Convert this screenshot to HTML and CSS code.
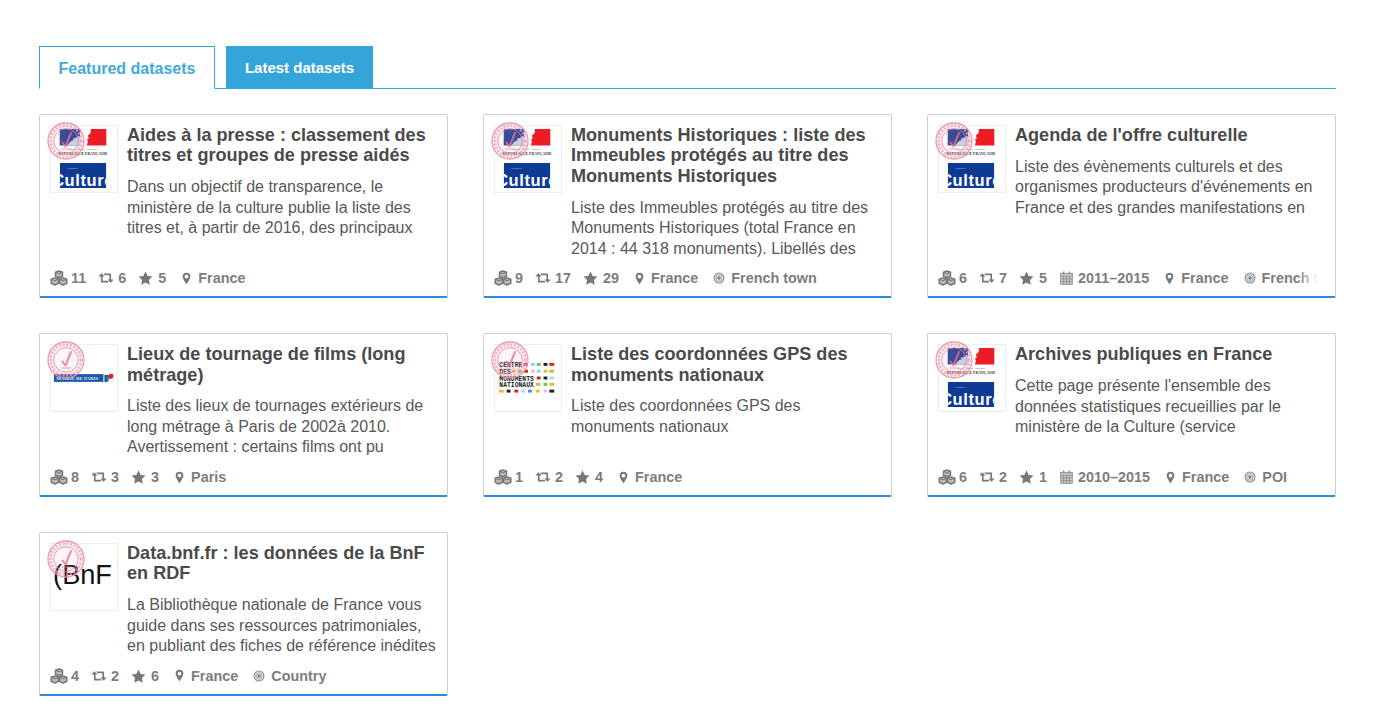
FILE: index.html
```html
<!DOCTYPE html>
<html lang="fr">
<head>
<meta charset="utf-8">
<title>Datasets</title>
<link rel="stylesheet" href="styles.css">
</head>
<body>
<svg class="defs" width="0" height="0" aria-hidden="true">
  <defs>
    <symbol id="i-cubes" viewBox="0 0 18 16">
      <g fill="#bbb" stroke="currentColor" stroke-width="1.500" stroke-linejoin="round">
        <path d="M9 1l3.500 1.300v4L9 7.800 5.500 6.300v-4z"/>
        <path d="M5 8l3.500 1.300v4L5 15 1.200 13.300v-4z"/>
        <path d="M13 8l3.800 1.300v4L13 15l-3.500-1.700v-4z"/>
        <path d="M5.500 2.300L9 3.800l3.500-1.500M1.200 9.300L5 10.800l3.500-1.500M9.500 9.300l3.500 1.500 3.800-1.500" fill="none" stroke-width="1"/>
      </g>
    </symbol>
    <symbol id="i-retweet" viewBox="0 0 17 12">
      <path fill="currentColor" d="M3.500 1L7 4.500H4.900V9H10l1.500 1.800H3.800a.7.700 0 0 1-.7-.7V4.500H.400z"/>
      <path fill="currentColor" d="M13.500 11L10 7.500h2.100V3H7L5.500 1.200h7.700a.7.700 0 0 1 .7.700v5.600h2.700z"/>
    </symbol>
    <symbol id="i-star" viewBox="0 0 16 15">
      <path fill="currentColor" d="M8 .5l2.300 4.800 5.200.7-3.800 3.600.9 5.200L8 12.300l-4.600 2.500.9-5.200L.5 6l5.200-.7z"/>
    </symbol>
    <symbol id="i-marker" viewBox="0 0 10 14">
      <path fill="currentColor" fill-rule="evenodd" d="M5 .5a4.300 4.300 0 0 1 4.300 4.300c0 2-2.700 6.500-4.300 8.700C3.400 11.300.7 6.800.7 4.800A4.300 4.300 0 0 1 5 .5zm0 2.200a2.100 2.100 0 1 0 0 4.200 2.100 2.100 0 0 0 0-4.200z"/>
    </symbol>
    <symbol id="i-calendar" viewBox="0 0 14 15">
      <rect x=".5" y="2" width="13" height="12.500" fill="#ccc"/>
      <g fill="none" stroke="#8a8a8a" stroke-width=".9">
        <rect x=".8" y="2.500" width="12.400" height="11.800"/>
        <path d="M.8 5.500h12.400M.8 8.500h12.400M.8 11.400h12.400M3.900 5.500v8.800M7 5.500v8.800M10.100 5.500v8.800"/>
        <path d="M3.900.5v3M10.100.5v3" stroke-width="1.500"/>
      </g>
    </symbol>
    <symbol id="i-bullseye" viewBox="0 0 14 14">
      <circle cx="7" cy="7" r="5.800" fill="#ddd" stroke="#8d8d8d" stroke-width="1.200"/>
      <circle cx="7" cy="7" r="3.700" fill="#eee" stroke="#999" stroke-width=".9"/>
      <circle cx="7" cy="7" r="2.100" fill="#808080"/>
    </symbol>
    <symbol id="seal" viewBox="0 0 38 38">
      <circle cx="19" cy="19" r="18" fill="#f1a9ba" fill-opacity=".12" stroke="#ea8fa5" stroke-opacity=".9" stroke-width="1.300"/>
      <circle cx="19" cy="19" r="15.300" fill="none" stroke="#ee9fb2" stroke-opacity=".75" stroke-width="3" stroke-dasharray="2 1.600"/>
      <circle cx="19" cy="19" r="12.300" fill="none" stroke="#e8849c" stroke-opacity=".85" stroke-width="1"/>
      <path d="M15.500 20.500l3 4L24 11" fill="none" stroke="#e8718e" stroke-opacity=".8" stroke-width="2" stroke-linecap="round" stroke-linejoin="round"/>
      <path d="M14 27h10" stroke="#e8849c" stroke-opacity=".7" stroke-width="1.100"/>
    </symbol>
    <symbol id="logo-culture" viewBox="0 0 68 68">
      <rect x="9" y="3" width="21" height="17" fill="#1f3f95"/>
      <path d="M17 20c2-3 5-6 7-5l-2-2c2 0 5-1 6-3l2 2v8z" fill="#c9d3ea"/>
      <path d="M41 3H57V20H37l1-4-1-2 2-1-1-3 3-3z" fill="#ed1c24"/>
      <text x="33" y="24.500" class="logo-tiny">Liberté · Égalité · Fraternité</text>
      <text x="33" y="29.500" class="logo-rf">RÉPUBLIQUE FRANÇAISE</text>
      <svg x="9" y="38" width="48" height="26" viewBox="0 0 48 26">
        <rect width="48" height="26" fill="#0f3a94"/>
        <text x="8" y="6" class="logo-min">Ministère</text>
        <text x="24" y="24" class="logo-cult">Culture</text>
      </svg>
    </symbol>
    <symbol id="logo-paris" viewBox="0 0 68 68">
      <rect x="3" y="30" width="61" height="8" fill="#1c5aa8"/>
      <text x="27" y="36" class="logo-paris-t">MAIRIE DE PARIS</text>
      <rect x="54" y="30" width="10" height="8" fill="#fff"/>
      <path d="M60 30h4v4l-3 1-3-1z" fill="#e2231a"/>
      <path d="M55 31h4l1 2-3 1 3 1-2 3h-3z" fill="#1c5aa8"/>
    </symbol>
    <symbol id="logo-gps" viewBox="0 0 68 68">
      <text x="4.500" y="23" class="logo-gps-t">CENTRE</text>
      <text x="4.500" y="30" class="logo-gps-t">DES</text>
      <text x="4.500" y="37" class="logo-gps-t">MONUMENTS</text>
      <text x="4.500" y="43.500" class="logo-gps-t">NATIONAUX</text>
      <g>
        <rect x="29" y="18.500" width="5" height="3" fill="#e2231a"/><rect x="37" y="18.500" width="4" height="3" fill="#8fd0ee"/><rect x="43" y="18.500" width="4" height="3" fill="#6bbf4e"/><rect x="50" y="18.500" width="4" height="3" fill="#222"/><rect x="56" y="18.500" width="5" height="3" fill="#e2231a"/>
        <rect x="17" y="25.500" width="4" height="3" fill="#f2b632"/><rect x="24" y="25.500" width="4" height="3" fill="#6bbf4e"/><rect x="30" y="25.500" width="4" height="3" fill="#e2231a"/><rect x="37" y="25.500" width="4" height="3" fill="#f5b6cf"/><rect x="43" y="25.500" width="4" height="3" fill="#8fd0ee"/><rect x="50" y="25.500" width="4" height="3" fill="#f2b632"/><rect x="56" y="25.500" width="5" height="3" fill="#c9c22f"/>
        <rect x="43" y="32.500" width="4" height="3" fill="#e2231a"/><rect x="50" y="32.500" width="4" height="3" fill="#222"/><rect x="56" y="32.500" width="5" height="3" fill="#a8dcf2"/>
        <rect x="42" y="39" width="5" height="3" fill="#c9c22f"/><rect x="50" y="39" width="4" height="3" fill="#6bbf4e"/><rect x="56" y="39" width="5" height="3" fill="#f2b632"/>
        <rect x="4" y="46" width="5" height="3" fill="#f2b632"/><rect x="12" y="46" width="4" height="3" fill="#222"/><rect x="20" y="46" width="4" height="3" fill="#e2231a"/><rect x="27" y="46" width="4" height="3" fill="#a8dcf2"/><rect x="34" y="46" width="4" height="3" fill="#3a9ad9"/><rect x="42" y="46" width="4" height="3" fill="#f2b632"/><rect x="50" y="46" width="4" height="3" fill="#f5b6cf"/><rect x="56" y="46" width="5" height="3" fill="#222"/>
      </g>
    </symbol>
    <symbol id="logo-bnf" viewBox="0 0 68 68">
      <text x="32.500" y="41" class="logo-bnf-t">(BnF</text>
    </symbol>
  </defs>
</svg>

<main class="page">
  <nav class="tabs">
    <a class="tab tab-active">Featured datasets</a>
    <a class="tab tab-idle">Latest datasets</a>
  </nav>

  <section class="grid">
    <article class="card">
      <div class="top">
        <div class="logo"><svg class="logo-img"><use href="#logo-culture"/></svg><svg class="seal"><use href="#seal"/></svg></div>
        <div class="body">
          <h4 class="title">Aides à la presse : classement des titres et groupes de presse aidés</h4>
          <p class="desc">Dans un objectif de transparence, le ministère de la culture publie la liste des titres et, à partir de 2016, des principaux</p>
        </div>
      </div>
      <ul class="meta">
        <li><svg class="ic ic-cubes"><use href="#i-cubes"/></svg>11</li>
        <li><svg class="ic ic-rt"><use href="#i-retweet"/></svg>6</li>
        <li><svg class="ic ic-star"><use href="#i-star"/></svg>5</li>
        <li><svg class="ic ic-marker"><use href="#i-marker"/></svg>France</li>
      </ul>
    </article>

    <article class="card">
      <div class="top">
        <div class="logo"><svg class="logo-img"><use href="#logo-culture"/></svg><svg class="seal"><use href="#seal"/></svg></div>
        <div class="body">
          <h4 class="title">Monuments Historiques : liste des Immeubles protégés au titre des Monuments Historiques</h4>
          <p class="desc">Liste des Immeubles protégés au titre des Monuments Historiques (total France en 2014 : 44 318 monuments). Libellés des</p>
        </div>
      </div>
      <ul class="meta">
        <li><svg class="ic ic-cubes"><use href="#i-cubes"/></svg>9</li>
        <li><svg class="ic ic-rt"><use href="#i-retweet"/></svg>17</li>
        <li><svg class="ic ic-star"><use href="#i-star"/></svg>29</li>
        <li><svg class="ic ic-marker"><use href="#i-marker"/></svg>France</li>
        <li><svg class="ic ic-bull"><use href="#i-bullseye"/></svg>French town</li>
      </ul>
    </article>

    <article class="card">
      <div class="top">
        <div class="logo"><svg class="logo-img"><use href="#logo-culture"/></svg><svg class="seal"><use href="#seal"/></svg></div>
        <div class="body">
          <h4 class="title">Agenda de l'offre culturelle</h4>
          <p class="desc">Liste des évènements culturels et des organismes producteurs d'événements en France et des grandes manifestations en</p>
        </div>
      </div>
      <ul class="meta meta-fade">
        <li><svg class="ic ic-cubes"><use href="#i-cubes"/></svg>6</li>
        <li><svg class="ic ic-rt"><use href="#i-retweet"/></svg>7</li>
        <li><svg class="ic ic-star"><use href="#i-star"/></svg>5</li>
        <li><svg class="ic ic-cal"><use href="#i-calendar"/></svg>2011–2015</li>
        <li><svg class="ic ic-marker"><use href="#i-marker"/></svg>France</li>
        <li><svg class="ic ic-bull"><use href="#i-bullseye"/></svg>French town</li>
      </ul>
    </article>

    <article class="card">
      <div class="top">
        <div class="logo"><svg class="logo-img"><use href="#logo-paris"/></svg><svg class="seal"><use href="#seal"/></svg></div>
        <div class="body">
          <h4 class="title">Lieux de tournage de films (long métrage)</h4>
          <p class="desc">Liste des lieux de tournages extérieurs de long métrage à Paris de 2002à 2010. Avertissement : certains films ont pu</p>
        </div>
      </div>
      <ul class="meta">
        <li><svg class="ic ic-cubes"><use href="#i-cubes"/></svg>8</li>
        <li><svg class="ic ic-rt"><use href="#i-retweet"/></svg>3</li>
        <li><svg class="ic ic-star"><use href="#i-star"/></svg>3</li>
        <li><svg class="ic ic-marker"><use href="#i-marker"/></svg>Paris</li>
      </ul>
    </article>

    <article class="card">
      <div class="top">
        <div class="logo"><svg class="logo-img"><use href="#logo-gps"/></svg><svg class="seal"><use href="#seal"/></svg></div>
        <div class="body">
          <h4 class="title">Liste des coordonnées GPS des monuments nationaux</h4>
          <p class="desc">Liste des coordonnées GPS des monuments nationaux</p>
        </div>
      </div>
      <ul class="meta">
        <li><svg class="ic ic-cubes"><use href="#i-cubes"/></svg>1</li>
        <li><svg class="ic ic-rt"><use href="#i-retweet"/></svg>2</li>
        <li><svg class="ic ic-star"><use href="#i-star"/></svg>4</li>
        <li><svg class="ic ic-marker"><use href="#i-marker"/></svg>France</li>
      </ul>
    </article>

    <article class="card">
      <div class="top">
        <div class="logo"><svg class="logo-img"><use href="#logo-culture"/></svg><svg class="seal"><use href="#seal"/></svg></div>
        <div class="body">
          <h4 class="title">Archives publiques en France</h4>
          <p class="desc">Cette page présente l'ensemble des données statistiques recueillies par le ministère de la Culture (service</p>
        </div>
      </div>
      <ul class="meta">
        <li><svg class="ic ic-cubes"><use href="#i-cubes"/></svg>6</li>
        <li><svg class="ic ic-rt"><use href="#i-retweet"/></svg>2</li>
        <li><svg class="ic ic-star"><use href="#i-star"/></svg>1</li>
        <li><svg class="ic ic-cal"><use href="#i-calendar"/></svg>2010–2015</li>
        <li><svg class="ic ic-marker"><use href="#i-marker"/></svg>France</li>
        <li><svg class="ic ic-bull"><use href="#i-bullseye"/></svg>POI</li>
      </ul>
    </article>

    <article class="card">
      <div class="top">
        <div class="logo"><svg class="logo-img"><use href="#logo-bnf"/></svg><svg class="seal"><use href="#seal"/></svg></div>
        <div class="body">
          <h4 class="title">Data.bnf.fr : les données de la BnF en RDF</h4>
          <p class="desc">La Bibliothèque nationale de France vous guide dans ses ressources patrimoniales, en publiant des fiches de référence inédites</p>
        </div>
      </div>
      <ul class="meta">
        <li><svg class="ic ic-cubes"><use href="#i-cubes"/></svg>4</li>
        <li><svg class="ic ic-rt"><use href="#i-retweet"/></svg>2</li>
        <li><svg class="ic ic-star"><use href="#i-star"/></svg>6</li>
        <li><svg class="ic ic-marker"><use href="#i-marker"/></svg>France</li>
        <li><svg class="ic ic-bull"><use href="#i-bullseye"/></svg>Country</li>
      </ul>
    </article>
  </section>
</main>
</body>
</html>
```

FILE: styles.css
```css
* { box-sizing: border-box; }

html, body { margin: 0; padding: 0; background: #fff; }

body {
  font-family: "Liberation Sans", Arial, sans-serif;
  color: #555;
}

.defs { position: absolute; }

.page { padding: 46px 40px 0 39px; }

.tabs {
  display: flex;
  gap: 11px;
  border-bottom: 1px solid #35a6d9;
  height: 43px;
}

.tab {
  display: block;
  height: 43px;
  font-weight: 700;
  line-height: 43px;
  text-align: center;
}

.tab-active {
  width: 176px;
  font-size: 16px;
  color: #44a9da;
  background: #fff;
  border: 1px solid #35a6d9;
  border-bottom-color: #fff;
}

.tab-idle {
  width: 147px;
  font-size: 15px;
  color: #fff;
  background: #34a5d8;
}

.grid {
  display: grid;
  grid-template-columns: repeat(3, 409px);
  column-gap: 35px;
  row-gap: 35px;
  margin-top: 25px;
  align-items: stretch;
}

.card {
  display: flex;
  flex-direction: column;
  border: 1px solid #cfcfcf;
  border-bottom: 2px solid #2b8bd6;
  border-radius: 2px;
  padding: 10px 8px 8px 10px;
  background: #fff;
  min-width: 0;
}

.top {
  display: flex;
  gap: 9px;
}

.logo {
  position: relative;
  flex: none;
  width: 68px;
  height: 68px;
  border: 1px solid #eee;
}

.logo-img {
  display: block;
  width: 66px;
  height: 66px;
}

.seal {
  position: absolute;
  left: -4px;
  top: -4px;
  width: 38px;
  height: 38px;
}

.body { min-width: 0; flex: 1; }

.title {
  margin: 0 0 11.4px;
  font-size: 18.1px;
  font-weight: 700;
  line-height: 20.4px;
  color: #4a4a4a;
}

.desc {
  margin: 0;
  height: 61.5px;
  overflow: hidden;
  font-size: 16px;
  line-height: 20.5px;
  color: #585858;
}

.meta {
  position: relative;
  display: flex;
  gap: 12px;
  margin: auto 0 0;
  padding: 9.1px 0 0;
  list-style: none;
  white-space: nowrap;
  overflow: hidden;
  font-size: 14.4px;
  font-weight: 700;
  line-height: 20px;
  color: #7d7d7d;
}

.meta li {
  display: flex;
  align-items: center;
  flex: none;
}

.meta-fade::after {
  content: "";
  position: absolute;
  top: 0;
  right: 0;
  bottom: 0;
  width: 30px;
  background: linear-gradient(to right, rgba(255,255,255,0), #fff 70%);
}

.ic { display: block; flex: none; margin-right: 3px; color: #777; }
.ic-cubes { width: 18px; height: 16px; }
.ic-rt { width: 16px; height: 12px; margin-right: 4px; }
.ic-star { width: 15px; height: 14px; margin-right: 5px; }
.ic-marker { width: 9px; height: 13px; margin-right: 7px; margin-left: 4px; }
.ic-cal { width: 13px; height: 14px; margin-right: 5px; margin-left: 1px; }
.ic-bull { width: 12px; height: 12px; margin-right: 6px; margin-left: 3px; }

.logo-tiny { font: 2.4px "Liberation Sans", sans-serif; fill: #666; text-anchor: middle; }
.logo-rf { font: 700 4px "Liberation Serif", serif; fill: #333; text-anchor: middle; }
.logo-min { font: 2.6px "Liberation Sans", sans-serif; fill: #b9c6e6; }
.logo-cult { font: 700 17px "Liberation Sans", sans-serif; fill: #fff; text-anchor: middle; letter-spacing: .6px; }
.logo-paris-t { font: 700 5px "Liberation Serif", serif; fill: #dfe8f5; text-anchor: middle; }
.logo-gps-t { font: 700 6.600px "Liberation Mono", monospace; fill: #222; }
.logo-bnf-t { font: 28px "Liberation Sans", sans-serif; fill: #111; text-anchor: middle; }
```
